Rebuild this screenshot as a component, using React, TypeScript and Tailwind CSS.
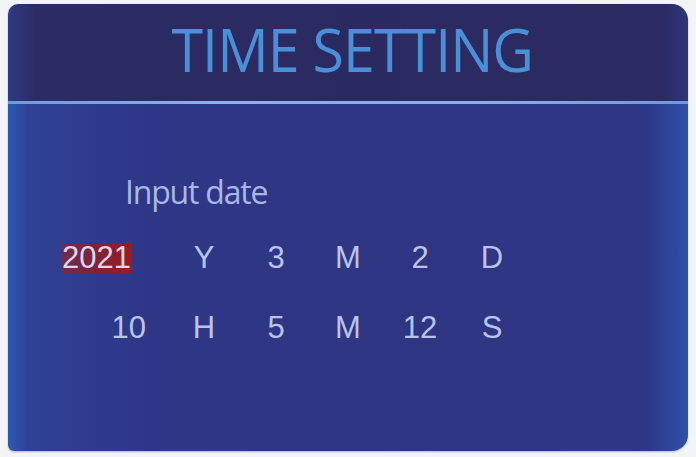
import React from "react";

const rows = [
  { lead: "2021", leadSel: true, cells: ["Y", "3", "M", "2", "D"] },
  { lead: "10", leadSel: false, cells: ["H", "5", "M", "12", "S"] },
];

function Row({ lead, leadSel, cells }: { lead: string; leadSel: boolean; cells: string[] }) {
  return (
    <div className="flex items-center h-[30px]">
      <div className={`w-[160px] shrink-0 flex ${leadSel ? "justify-start pl-[53px]" : "justify-end pr-[22px]"}`}>
        <span
          className={
            leadSel
              ? "px-[1px] leading-[30px] bg-[linear-gradient(90deg,#6e2c52_0%,#86202f_60%,#9c1a22_100%)] text-[#dcd6ee]"
              : "leading-[30px] text-[#b8c4ec]"
          }
        >
          {lead}
        </span>
      </div>
      {cells.map((c, i) => (
        <div key={i} className="w-[72px] shrink-0 text-center leading-[30px] text-[#b8c4ec]">
          {c}
        </div>
      ))}
    </div>
  );
}

export default function App() {
  return (
    <div className="w-[696px] h-[457px] bg-[#f3f4f7] pt-[4px] pl-[8px] pr-[8px] pb-[6px]">
      <div className="h-full flex flex-col rounded-tl-[10px] rounded-tr-[16px] rounded-bl-[6px] rounded-br-[16px] overflow-hidden shadow-[0_1px_2px_rgba(0,0,0,0.25)]">
        <div className="h-[97px] shrink-0 flex items-center justify-center bg-[linear-gradient(90deg,#2e3a82_0%,#2b2c66_4%,#2b2a60_50%,#2b2a62_96%,#2e3576_100%)]">
          <h1
            className="text-[#4a8fd8] text-[60px] leading-none tracking-[-1px] mt-[-7px] ml-[8px] scale-x-[0.955] font-medium"
            style={{ fontFamily: '"Open Sans", "Noto Sans", sans-serif' }}
          >
            TIME SETTING
          </h1>
        </div>
        <div className="h-[3px] shrink-0 bg-[linear-gradient(90deg,#6f9ad8_0%,#8fb0ea_30%,#8aaee8_70%,#6f98da_100%)]" />
        <div className="flex-1 bg-[linear-gradient(90deg,#2f58b2_0%,#2e4196_3%,#2e3787_20%,#2f3582_60%,#2e3787_94%,#3050a8_100%)]">
          <div
            className="pl-[117px] pt-[72px] text-[#a9b7e6] text-[32px] leading-none tracking-[-1.2px]"
            style={{ fontFamily: '"Open Sans", "Noto Sans", sans-serif' }}
          >
            Input date
          </div>
          <div
            className="mt-[35px] flex flex-col gap-[40px] text-[31px]"
            style={{ fontFamily: '"Liberation Sans", Arial, sans-serif' }}
          >
            {rows.map((r, i) => (
              <Row key={i} {...r} />
            ))}
          </div>
        </div>
      </div>
    </div>
  );
}
